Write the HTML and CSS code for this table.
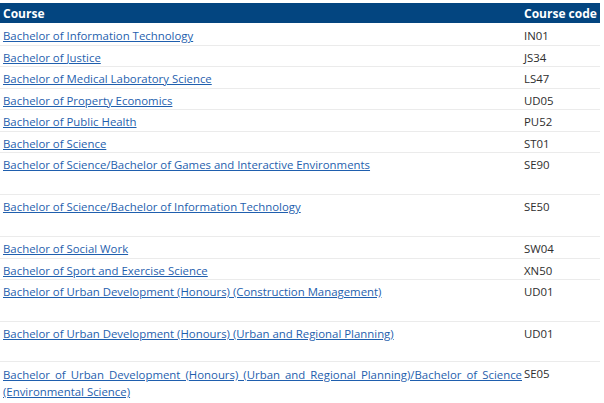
FILE: index.html
```html
<!DOCTYPE html>
<html>
<head>
<meta charset="utf-8">
<link rel="stylesheet" href="styles.css">
</head>
<body>
<table class="courses">
  <colgroup><col class="c-name"><col class="c-code"></colgroup>
  <thead>
    <tr><th>Course</th><th>Course code</th></tr>
  </thead>
  <tbody>
    <tr><td><a href="#">Bachelor of Information Technology</a></td><td>IN01</td></tr>
    <tr><td><a href="#">Bachelor of Justice</a></td><td>JS34</td></tr>
    <tr><td><a href="#">Bachelor of Medical Laboratory Science</a></td><td>LS47</td></tr>
    <tr><td><a href="#">Bachelor of Property Economics</a></td><td>UD05</td></tr>
    <tr><td><a href="#">Bachelor of Public Health</a></td><td>PU52</td></tr>
    <tr><td><a href="#">Bachelor of Science</a></td><td>ST01</td></tr>
    <tr class="tall"><td><a href="#">Bachelor of Science/Bachelor of Games and Interactive Environments</a></td><td>SE90</td></tr>
    <tr class="tall"><td><a href="#">Bachelor of Science/Bachelor of Information Technology</a></td><td>SE50</td></tr>
    <tr><td><a href="#">Bachelor of Social Work</a></td><td>SW04</td></tr>
    <tr><td><a href="#">Bachelor of Sport and Exercise Science</a></td><td>XN50</td></tr>
    <tr class="tall"><td><a href="#">Bachelor of Urban Development (Honours) (Construction Management)</a></td><td>UD01</td></tr>
    <tr class="tall2"><td><a href="#">Bachelor of Urban Development (Honours) (Urban and Regional Planning)</a></td><td>UD01</td></tr>
    <tr class="tall"><td class="just"><a href="#">Bachelor of Urban Development (Honours) (Urban and Regional Planning)/Bachelor of Science (Environmental Science)</a></td><td>SE05</td></tr>
  </tbody>
</table>
</body>
</html>
```

FILE: styles.css
```css
html, body {
  margin: 0;
  padding: 0;
  background: #ffffff;
}
body {
  padding-top: 3px;
  font-family: "Open Sans", "Noto Sans", sans-serif;
  font-size: 11.4px;
  color: #2e2e2e;
}
.courses {
  width: 600px;
  border-collapse: collapse;
  table-layout: fixed;
}
.c-name { width: 522px; }
.c-code { width: 78px; }
.courses th {
  background: #034580;
  color: #ffffff;
  font-weight: 700;
  font-size: 12px;
  text-align: left;
  height: 20px;
  padding: 0 3px;
  vertical-align: middle;
  line-height: 15px;
  box-sizing: border-box;
}
.courses th + th { padding-left: 2px; }
.courses td {
  height: 21.5px;
  padding: 4px 3px 0 3px;
  vertical-align: top;
  line-height: 15px;
  border-bottom: 1px solid #ebebeb;
  box-sizing: border-box;
}
.courses tbody tr:first-child td { height: 22px; padding-top: 5px; }
.courses td + td { padding-left: 2px; padding-right: 0; }
.courses tr.tall td { height: 42px; }
.courses tr.tall2 td { height: 40px; }
.courses a {
  color: #1f5fae;
  text-decoration: underline;
}
.courses td.just {
  text-align: justify;
  padding-right: 0;
  line-height: 17px;
}
```
